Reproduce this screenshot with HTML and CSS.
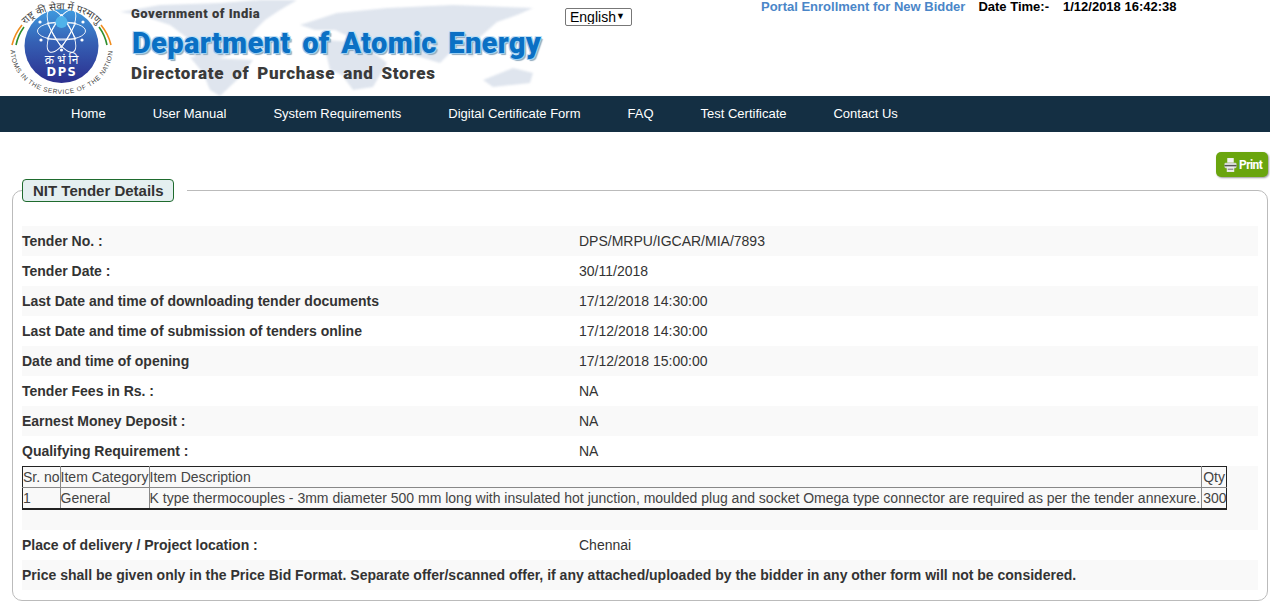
FILE: index.html
```html
<!DOCTYPE html>
<html lang="en">
<head>
<meta charset="utf-8">
<title>NIT Tender Details</title>
<link rel="stylesheet" href="styles.css">
</head>
<body>
<header class="masthead">
  <svg class="worldmap" viewBox="0 0 440 96" width="440" height="96" aria-hidden="true">
    <g fill="#dfe5ee">
      <path d="M0 12 L40 5 L100 3 L140 0 L177 0 L160 10 L145 20 L135 30 L125 50 L100 58 L75 58 L70 40 L50 25 L20 15Z"/>
      <path d="M70 57 L133 60 L120 77 L100 96 L90 90 L83 73Z"/>
      <path d="M180 25 L217 13 L267 8 L333 5 L413 8 L397 15 L377 22 L360 37 L353 57 L333 50 L320 63 L300 57 L270 50 L240 42 L215 30 L195 30Z"/>
      <path d="M203 40 L240 42 L267 63 L253 87 L233 90 L222 75 L210 70Z"/>
      <path d="M363 80 L393 68 L413 73 L410 83 L373 87Z"/>
    </g>
  </svg>
  <svg class="logo" viewBox="0 0 114 96" width="114" height="96" role="img" aria-label="DPS emblem">
    <defs>
      <path id="arcTop" d="M17 36 A42 31 0 0 1 100 36"/>
      <path id="arcBottom" d="M7.5 50 A51 44 0 0 0 109.5 50"/>
      <linearGradient id="disc" x1="0" y1="0" x2="0" y2="1">
        <stop offset="0" stop-color="#3f9be0"/>
        <stop offset="0.45" stop-color="#3560b4"/>
        <stop offset="1" stop-color="#2c2f8f"/>
      </linearGradient>
    </defs>
    <circle cx="58.5" cy="46" r="37" fill="url(#disc)"/>
    <g fill="none" stroke="#fff" stroke-width="0.9">
      <ellipse cx="58.5" cy="31" rx="24" ry="9"/>
      <ellipse cx="58.5" cy="31" rx="24" ry="9" transform="rotate(60 58.5 31)"/>
      <ellipse cx="58.5" cy="31" rx="24" ry="9" transform="rotate(120 58.5 31)"/>
      <path d="M44 23 L73 23 L58.5 48Z"/>
      <path d="M44 39 L73 39 L58.5 14Z"/>
    </g>
    <circle cx="58.5" cy="22" r="6" fill="#4fb3ea"/>
    <g fill="#fff"><circle cx="38" cy="40" r="1.6"/><circle cx="79" cy="40" r="1.6"/><circle cx="58.5" cy="50" r="1.6"/><circle cx="37" cy="22" r="1.6"/><circle cx="80" cy="22" r="1.6"/></g>
    <path d="M9 45 A50 50 0 0 1 19 25" fill="none" stroke="#f08c1e" stroke-width="1.6"/>
    <path d="M13 45 A46 46 0 0 1 21 27" fill="none" stroke="#2f8f2f" stroke-width="1.6"/>
    <path d="M108 45 A50 50 0 0 0 98 25" fill="none" stroke="#f08c1e" stroke-width="1.6"/>
    <path d="M104 45 A46 46 0 0 0 96 27" fill="none" stroke="#2f8f2f" stroke-width="1.6"/>
    <text class="logo-hindi-arc"><textPath href="#arcTop" startOffset="50%" text-anchor="middle">राष्ट्र की सेवा में परमाणु</textPath></text>
    <text class="logo-arc"><textPath href="#arcBottom" textLength="148">ATOMS IN THE SERVICE OF THE NATION</textPath></text>
    <text class="logo-hindi" x="58.5" y="64" text-anchor="middle">क्र भं नि</text>
    <text class="logo-dps" x="59" y="76" text-anchor="middle">DPS</text>
  </svg>
  <div class="brand">
    <div class="brand-gov">Government of India</div>
    <div class="brand-dept">Department of Atomic Energy</div>
    <div class="brand-dir">Directorate of Purchase and Stores</div>
  </div>
  <div class="lang-wrap">
    <select class="lang" aria-label="Language"><option>English</option></select>
  </div>
  <div class="topinfo">
    <a class="enrol" href="#">Portal Enrollment for New Bidder</a>
    <span class="dt-label">Date Time:-</span>
    <span class="dt-value">1/12/2018 16:42:38</span>
  </div>
</header>
<nav class="mainnav">
  <a href="#">Home</a>
  <a href="#">User Manual</a>
  <a href="#">System Requirements</a>
  <a href="#">Digital Certificate Form</a>
  <a href="#">FAQ</a>
  <a href="#">Test Certificate</a>
  <a href="#">Contact Us</a>
</nav>
<main class="content">
  <div class="printbar">
    <button class="printbtn" type="button">
      <svg viewBox="0 0 14 16" width="13" height="16" aria-hidden="true">
        <rect x="3.5" y="0.5" width="7" height="5" fill="#f2f2f2"/>
        <rect x="0.5" y="5.5" width="13" height="6" rx="1.5" fill="#d5d8d5"/>
        <rect x="0.5" y="8" width="13" height="1.4" fill="#555"/>
        <rect x="3" y="10" width="8" height="5.5" fill="#eee"/>
        <rect x="4" y="12" width="6" height="1" fill="#666"/>
      </svg>
      <span>Print</span>
    </button>
  </div>
  <fieldset class="panel">
    <legend class="panel-legend"><span class="panel-title">NIT Tender Details</span></legend>
    <div class="row"><div class="label">Tender No. :</div><div class="value">DPS/MRPU/IGCAR/MIA/7893</div></div>
    <div class="row"><div class="label">Tender Date :</div><div class="value">30/11/2018</div></div>
    <div class="row"><div class="label">Last Date and time of downloading tender documents</div><div class="value">17/12/2018 14:30:00</div></div>
    <div class="row"><div class="label">Last Date and time of submission of tenders online</div><div class="value">17/12/2018 14:30:00</div></div>
    <div class="row"><div class="label">Date and time of opening</div><div class="value">17/12/2018 15:00:00</div></div>
    <div class="row"><div class="label">Tender Fees in Rs. :</div><div class="value">NA</div></div>
    <div class="row"><div class="label">Earnest Money Deposit :</div><div class="value">NA</div></div>
    <div class="row"><div class="label">Qualifying Requirement :</div><div class="value">NA</div></div>
    <div class="row row-table">
      <table class="items">
        <tr><td>Sr. no</td><td>Item Category</td><td class="col-desc">Item Description</td><td class="col-qty">Qty</td></tr>
        <tr><td>1</td><td>General</td><td class="col-desc">K type thermocouples - 3mm diameter 500 mm long with insulated hot junction, moulded plug and socket Omega type connector are required as per the tender annexure.</td><td class="col-qty">300</td></tr>
      </table>
    </div>
    <div class="row"><div class="label">Place of delivery / Project location :</div><div class="value">Chennai</div></div>
    <div class="row"><div class="label label-wide">Price shall be given only in the Price Bid Format. Separate offer/scanned offer, if any attached/uploaded by the bidder in any other form will not be considered.</div></div>
  </fieldset>
</main>
</body>
</html>
```
FILE: styles.css
```css
* { box-sizing: border-box; }
html, body { margin: 0; padding: 0; background: #fff; }
body { font-family: "Liberation Sans", Arial, sans-serif; font-size: 14px; color: #333; }

.masthead { position: relative; height: 96px; display: flex; align-items: flex-start; overflow: hidden; }
.worldmap { position: absolute; left: 120px; top: 0; filter: blur(1px); }
.logo { position: relative; flex: none; margin-left: 3px; width: 114px; height: 96px; }
.logo-arc { font: 6.5px "Liberation Sans", sans-serif; fill: #444; }
.logo-hindi-arc { font: 10px "Noto Sans", "Noto Sans Devanagari", sans-serif; fill: #444; }
.logo-hindi { font: 12px "Noto Sans", "Noto Sans Devanagari", sans-serif; fill: #fff; }
.logo-dps { font: bold 11.5px "DejaVu Sans", sans-serif; fill: #fff; letter-spacing: 1.5px; }

.brand { position: relative; flex: none; width: 434px; margin-left: 14px; }
.brand-gov { margin-top: 7px; font: 900 13px/13px "Roboto", sans-serif; color: #3a3a3a; letter-spacing: 0.5px; white-space: nowrap; }
.brand-dept { margin-top: 6px; margin-left: 1px; font: 900 29px/34px "Roboto", sans-serif; color: #0a70c4; letter-spacing: 0.35px; word-spacing: 4px; white-space: nowrap; text-shadow: 1px 1px 0 #9fd0f2, -1px -1px 0 #bfe0f6, 1px -1px 0 #bfe0f6, -1px 1px 0 #9fd0f2, 2px 2px 1px #8fa9bd; }
.brand-dir { margin-top: 3px; font: 900 17px/20px "Roboto", sans-serif; color: #3a3a3a; letter-spacing: 0.7px; word-spacing: 3px; white-space: nowrap; }

.lang-wrap { position: relative; flex: none; width: 67px; height: 18px; margin-top: 8px; }
.lang-wrap::after { content: "\25BC"; position: absolute; right: 7px; top: 3px; font-size: 9px; line-height: 10px; color: #000; pointer-events: none; }
.lang { display: block; width: 100%; height: 100%; padding: 0 0 1px 4px; appearance: none; font: 14px "Liberation Sans", sans-serif; color: #000; background: #fff; border: 1px solid #777; border-radius: 2px; }
.topinfo { position: relative; flex: none; margin-left: 129px; display: flex; white-space: nowrap; line-height: 14px; }
.enrol { color: #4a86c8; text-decoration: none; font-size: 13px; font-weight: bold; }
.dt-label { margin-left: 13px; font-size: 13px; font-weight: bold; color: #000; }
.dt-value { margin-left: 14px; font-size: 13px; font-weight: bold; color: #000; }

.mainnav { height: 36px; background: #142f43; display: flex; align-items: center; padding: 0 0 2px 47.5px; }
.mainnav a { color: #fff; text-decoration: none; font-size: 13px; padding: 0 23.5px; white-space: nowrap; }

.content { padding: 0 2px 0 12px; }
.printbar { display: flex; justify-content: flex-end; padding-top: 20px; height: 47px; }
.printbtn { width: 52px; height: 25px; padding: 0 0 0 8px; display: flex; align-items: center; gap: 2px; border: 0; border-radius: 5px; background: #6aa50e; box-shadow: 1px 1px 2px #999; color: #fff; font: bold 12px "Roboto", sans-serif; letter-spacing: -0.6px; }

.panel { margin: 0; padding: 24px 9px 10px; border: 1px solid #bbb; border-radius: 10px; min-width: 0; }
.panel-legend { margin: 0; padding: 0 13px 0 0; }
.panel-title { display: block; width: 152px; height: 23px; padding: 0 10px; line-height: 21px; font-size: 15px; font-weight: bold; color: #333; background: #e4eff0; border: 1px solid #1f6b2e; border-radius: 4px; white-space: nowrap; }

.row { display: flex; height: 30px; align-items: center; }
.row:nth-of-type(odd) { background: #f9f9f9; }
.label { flex: none; width: 557px; font-weight: bold; white-space: nowrap; }
.label-wide { width: auto; }
.value { flex: 1; }
.row-table { height: 64px; align-items: flex-start; background: #f9f9f9; }

.items { border-collapse: collapse; font-size: 14px; line-height: 16px; color: #444; }
.items td { border: 1px solid #888; padding: 2px 0; white-space: nowrap; }
.items tr:first-child td { border-top-color: #222; }
.items tr:last-child td { border-bottom: 2px solid #222; }
.items td:first-child { border-left-color: #222; }
.items td:last-child { border-right-color: #222; }
.items .col-desc { padding-right: 1px; }
.items .col-qty { padding-left: 1px; }
```
